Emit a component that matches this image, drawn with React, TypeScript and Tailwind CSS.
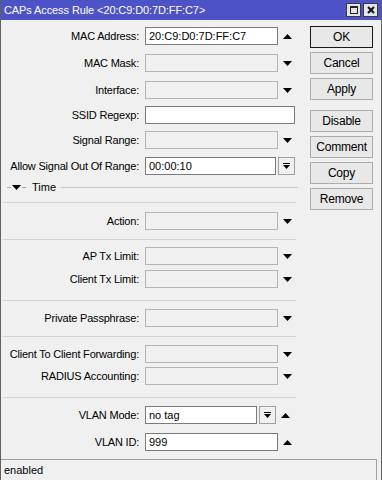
import type { ReactNode } from "react";

function Down() {
  return (
    <svg width="9" height="5" viewBox="0 0 9 5">
      <polygon points="0,0 9,0 4.5,5" fill="#000" />
    </svg>
  );
}

function Up() {
  return (
    <svg width="9" height="5" viewBox="0 0 9 5">
      <polygon points="0,5 9,5 4.5,0" fill="#000" />
    </svg>
  );
}

function DropButton() {
  return (
    <div className="w-[17px] h-[18px] ml-[2px] border border-[#a0a0a0] bg-[#f0f0f0] flex items-center justify-center">
      <svg width="7" height="7" viewBox="0 0 7 7">
        <rect x="0" y="0" width="7" height="1" fill="#000" />
        <polygon points="0,2 7,2 3.5,6" fill="#000" />
      </svg>
    </div>
  );
}

function Field({ value, editable, w = "w-[133px]" }: { value?: string; editable?: boolean; w?: string }) {
  return (
    <div
      className={
        w +
        " h-[18px] border flex items-center pl-[3px] " +
        (editable ? "bg-white border-[#7a7a7a]" : "bg-[#f0f0f0] border-[#b4b4b4]")
      }
    >
      {value}
    </div>
  );
}

function Row({ label, mt, children, arrow }: { label: string; mt: string; children: ReactNode; arrow?: "up" | "down" }) {
  return (
    <div className={"flex items-center h-[18px] " + mt}>
      <div className="w-[138px] text-right whitespace-nowrap tracking-[-0.2px]">{label}</div>
      <div className="ml-[6px] flex items-center">{children}</div>
      {arrow && (
        <div className="w-[18px] flex items-center justify-center">
          {arrow === "up" ? <Up /> : <Down />}
        </div>
      )}
    </div>
  );
}

function Sep({ mt }: { mt: string }) {
  return <div className={"h-px ml-[2px] w-[293px] bg-[#d4d4d4] " + mt} />;
}

function Btn({ label, mt, primary }: { label: string; mt: string; primary?: boolean }) {
  return (
    <div
      className={
        "w-[63px] h-[22px] flex items-center justify-center bg-[#e8e8e8] text-[12px] tracking-[-0.2px] " +
        mt +
        (primary ? " border border-[#1a1a1a]" : " border border-[#adadad]")
      }
    >
      {label}
    </div>
  );
}

export default function App() {
  return (
    <div className="w-[382px] h-[480px] bg-[#f0f0f0] flex flex-col border-l border-r border-[#606060] text-black text-[11px] font-['Liberation_Sans',Arial,sans-serif] overflow-hidden">
      <div className="h-[20px] bg-[#4d53c6] flex items-center justify-between pl-[3px] pr-[3px] shrink-0">
        <span className="text-white text-[11px] tracking-[-0.1px]">CAPs Access Rule &lt;20:C9:D0:7D:FF:C7&gt;</span>
        <div className="flex gap-[2px]">
          <div className="w-[15px] h-[14px] bg-[#e4e4e4] border border-[#3a3a3a] flex items-center justify-center">
            <div className="w-[8px] h-[8px] border border-[#222] border-t-2" />
          </div>
          <div className="w-[15px] h-[14px] bg-[#e4e4e4] border border-[#3a3a3a] flex items-center justify-center">
            <svg width="8" height="8" viewBox="0 0 8 8">
              <path d="M1 1 L7 7 M7 1 L1 7" stroke="#111" strokeWidth="2" />
            </svg>
          </div>
        </div>
      </div>

      <div className="flex flex-1">
        <div className="w-[309px] flex flex-col">
          <Row label="MAC Address:" mt="mt-[7px]" arrow="up">
            <Field value="20:C9:D0:7D:FF:C7" editable />
          </Row>
          <Row label="MAC Mask:" mt="mt-[9px]" arrow="down">
            <Field />
          </Row>
          <Row label="Interface:" mt="mt-[9px]" arrow="down">
            <Field />
          </Row>
          <Row label="SSID Regexp:" mt="mt-[7px]">
            <Field editable w="w-[150px]" />
          </Row>
          <Row label="Signal Range:" mt="mt-[7px]" arrow="down">
            <Field />
          </Row>
          <Row label="Allow Signal Out Of Range:" mt="mt-[8px]">
            <Field value="00:00:10" editable w="w-[131px]" />
            <DropButton />
          </Row>

          <div className="flex items-center h-[14px] mt-[5px] ml-[6px]">
            <div className="w-[4px] h-px bg-[#a8a8a8]" />
            <div className="mx-[1px] flex items-center">
              <Down />
            </div>
            <div className="w-[4px] h-px bg-[#a8a8a8]" />
            <span className="ml-[6px]">Time</span>
            <div className="ml-[5px] w-[237px] h-px bg-[#c8c8c8]" />
          </div>

          <Sep mt="mt-[8px]" />
          <Row label="Action:" mt="mt-[9px]" arrow="down">
            <Field />
          </Row>
          <Sep mt="mt-[9px]" />
          <Row label="AP Tx Limit:" mt="mt-[7px]" arrow="down">
            <Field />
          </Row>
          <Row label="Client Tx Limit:" mt="mt-[5px]" arrow="down">
            <Field />
          </Row>
          <Sep mt="mt-[12px]" />
          <Row label="Private Passphrase:" mt="mt-[8px]" arrow="down">
            <Field />
          </Row>
          <Sep mt="mt-[9px]" />
          <Row label="Client To Client Forwarding:" mt="mt-[8px]" arrow="down">
            <Field />
          </Row>
          <Row label="RADIUS Accounting:" mt="mt-[4px]" arrow="down">
            <Field />
          </Row>
          <Sep mt="mt-[12px]" />
          <Row label="VLAN Mode:" mt="mt-[8px]" arrow="up">
            <Field value="no tag" editable w="w-[112px]" />
            <DropButton />
          </Row>
          <Row label="VLAN ID:" mt="mt-[9px]" arrow="up">
            <Field value="999" editable />
          </Row>
        </div>

        <div className="flex flex-col">
          <Btn label="OK" mt="mt-[6px]" primary />
          <Btn label="Cancel" mt="mt-[4px]" />
          <Btn label="Apply" mt="mt-[4px]" />
          <Btn label="Disable" mt="mt-[10px]" />
          <Btn label="Comment" mt="mt-[4px]" />
          <Btn label="Copy" mt="mt-[4px]" />
          <Btn label="Remove" mt="mt-[4px]" />
        </div>
      </div>

      <div className="h-[21px] shrink-0 border-t border-[#a0a0a0] flex items-center pl-[3px] mr-[4px] border-r">
        enabled
      </div>
    </div>
  );
}
